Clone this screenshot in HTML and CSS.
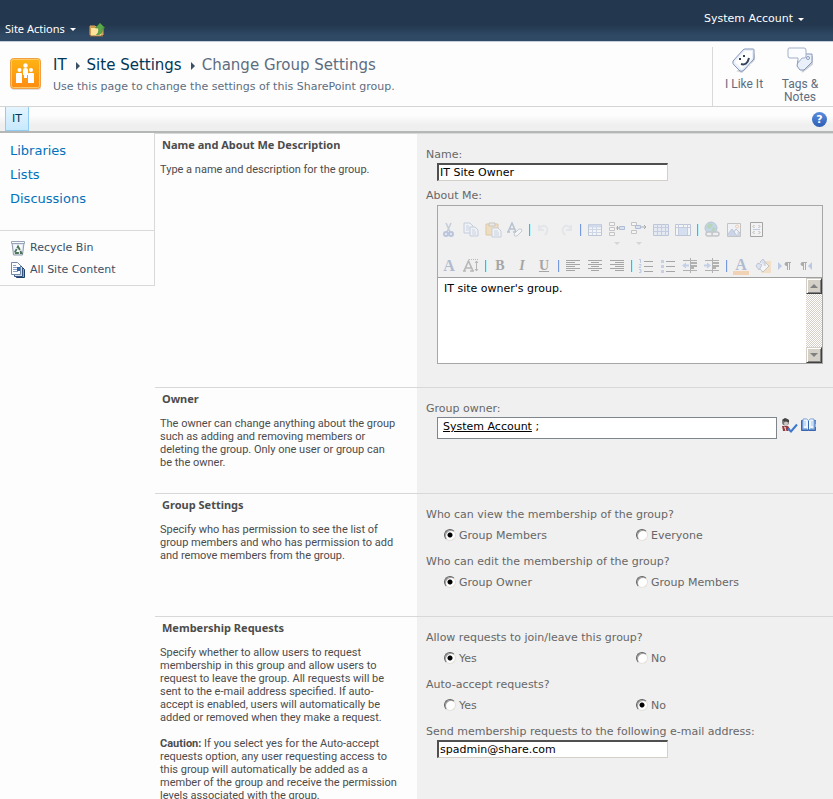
FILE: index.html
```html
<!DOCTYPE html>
<html lang="en">
<head>
<meta charset="utf-8">
<title>Change Group Settings</title>
<link rel="stylesheet" href="styles.css">
</head>
<body>
<header>
  <div class="topbar">
    <button class="menu site-actions" type="button">Site Actions <span class="caret"></span></button>
    <button class="up" type="button" aria-label="Navigate up">
      <svg width="18" height="16" viewBox="0 0 18 16"><path d="M1 4h5l1 1h7v8H1z" fill="#c79b45" stroke="#d8a466"/><path d="M2 6h11l-1 8H2z" fill="#ffe39a"/><path d="M1 14h13" stroke="#9c6b39"/><path d="M11 1l5 5h-2.500c0 5-2 7-6 6.500c2-1 2.500-3 2-6.500H6.500z" fill="#5aa848" stroke="#31833b" stroke-width=".6"/></svg>
    </button>
    <button class="menu account" type="button">System Account <span class="caret"></span></button>
  </div>
  <div class="titlebar">
    <svg class="logo" width="32" height="32" viewBox="0 0 32 32"><defs><linearGradient id="og" x2="0" y2="1"><stop offset="0" stop-color="#ffb414"/><stop offset=".5" stop-color="#fda111"/><stop offset="1" stop-color="#ff8a12"/></linearGradient></defs><rect x="1" y="2" width="30" height="30" rx="3" fill="#ddd"/><rect x=".5" y=".5" width="30" height="30" rx="3" fill="url(#og)" stroke="#f0a040"/><rect x="1.500" y="1.500" width="28" height="28" rx="2" fill="none" stroke="#ffc861"/><g fill="#fff"><circle cx="9.500" cy="12" r="2"/><circle cx="15.500" cy="7.500" r="2.200"/><circle cx="21" cy="12" r="2"/><path d="M6 16q0-1 1-1h4q1 0 1 1v9H6zM18 16q0-1 1-1h4q1 0 1 1v9h-6zM13 12q0-2 2.500-2t2.500 2v5h-1v3h-3v-3h-1z"/></g></svg>
    <div class="heading">
      <h1><a href="#">IT</a><span class="arrow"></span><a href="#">Site Settings</a><span class="arrow"></span><span>Change Group Settings</span></h1>
      <p>Use this page to change the settings of this SharePoint group.</p>
    </div>
    <div class="social">
      <button type="button"><svg width="26" height="28" viewBox="0 0 26 28"><path d="M5 24l6 2 13-13V6l-5 13z" fill="#cfd2d8"/><path d="M2 14L12 3q1-1 2-1h8q1 0 1 1v8q0 1-1 2L13 23q-2 2-4 1l-5-5q-3-2-2-5z" fill="#eaf0fa" stroke="#8395b7"/><path d="M4 15L14 4h7v7L11 22z" fill="#fff"/><path d="M8 11h2v2H8zM12 8h2v2h-2z" fill="#34435b"/><path d="M10 17q6 2 8-6" fill="none" stroke="#34435b" stroke-width="2"/></svg><span>I Like It</span></button>
      <button type="button"><svg width="28" height="28" viewBox="0 0 28 28"><path d="M16 25l10-8V9" fill="none" stroke="#ccd0d6" stroke-width="2"/><path d="M12 13l6-6h8v8l-8 8h-4l-3-4z" fill="#eaf0fa" stroke="#8598b8"/><circle cx="22" cy="11" r="1.500" fill="#fff" stroke="#8598b8"/><path d="M3 1h15q2 0 2 2v6q0 2-2 2h-2l-4 5v-5H4q-2 0-2-2V3q0-2 1-2z" fill="#fbfcff" stroke="#a2aec8"/></svg><span>Tags &amp;<br>Notes</span></button>
    </div>
  </div>
  <nav class="tabs">
    <a href="#">IT</a>
    <button class="help" type="button" aria-label="Help"><span>?</span></button>
  </nav>
</header>
<div class="layout">
  <aside>
    <ul class="lists">
      <li><a href="#">Libraries</a></li>
      <li><a href="#">Lists</a></li>
      <li><a href="#">Discussions</a></li>
    </ul>
    <ul class="tools">
      <li><a href="#"><svg width="16" height="16" viewBox="0 0 16 16"><path d="M2 3l1.500 12h9L14 3z" fill="#e4eaf2" stroke="#8e9cae"/><path d="M1.500 1.500h13v2h-13z" fill="#fafcff" stroke="#98a5b7"/><path d="M4 5h8l-1 9H5z" fill="#f8fbff"/><path d="M8 6.500l3.500 6.500h-7z" fill="none" stroke="#4e7559" stroke-width="1.800" stroke-dasharray="4 1"/></svg>Recycle Bin</a></li>
      <li><a href="#"><svg width="16" height="16" viewBox="0 0 16 16"><path d="M6.500 4.500h5l3 3v8h-8z" fill="#8aa6cb" stroke="#1d3d6a"/><path d="M4.500 2.500h5l3 3v9h-8z" fill="#cfddef" stroke="#34547f"/><path d="M1.500.5h6l3 3v9h-9z" fill="#fff" stroke="#7489a9"/><path d="M3 3.500h3M3 5.500h5M3 7.500h5M3 9.500h5" stroke="#89a2c4"/><path d="M7 5h3v4H7z" fill="#2e68aa"/></svg>All Site Content</a></li>
    </ul>
  </aside>
  <main>
    <section>
      <div class="about"><h2>Name and About Me Description</h2><p>Type a name and description for the group.</p></div>
      <div class="fields">
        <label for="name">Name:</label>
        <input class="text" id="name" type="text" value="IT Site Owner">
        <label class="next" for="aboutme">About Me:</label>
        <div class="editor">
          <div class="toolbar">
            <div class="toolrow">
              <button type="button" aria-label="Cut"><svg viewBox="0 0 16 16"><path d="M5 1l4 9M10 1L6 10" stroke="#7890ad" stroke-width="1.500"/><g fill="none" stroke="#5c78bd" stroke-width="2"><circle cx="5" cy="12" r="2"/><circle cx="10" cy="12" r="2"/></g></svg></button>
              <button type="button" aria-label="Copy"><svg viewBox="0 0 16 16"><g fill="#eef4ff" stroke="#7991bf"><path d="M1 1h6l3 3v7H1z"/><path d="M7 5h5l3 3v6H7z"/></g><path d="M3 4h3M3 6h4M3 8h3M9 8h3M9 10h4M9 12h4" stroke="#8ba3d0"/></svg></button>
              <button type="button" aria-label="Paste"><svg viewBox="0 0 16 16"><path d="M1 2h12v11H1z" fill="#f0be66" stroke="#b4863c"/><path d="M4 1h6v3H4z" fill="#ddd" stroke="#88806f"/><path d="M7 6h6l3 3v6H7z" fill="#f6f9ff" stroke="#7d94bd"/><path d="M9 9h4M9 11h5M9 13h5" stroke="#8ca1c4"/></svg></button>
              <button type="button" aria-label="Clear format"><svg viewBox="0 0 16 16"><path d="M1 10L5 1l4 9M3 7h4M0 10h3M6 10h4" fill="none" stroke="#536f9b" stroke-width="1.500"/><path d="M7 12l5-5q3-1 3 2l-5 5q-3 1-3-2z" fill="#fff" stroke="#7e8fab"/></svg></button>
              <i class="sep"></i>
              <button class="faint" type="button" aria-label="Undo"><svg viewBox="0 0 16 16"><path d="M3 3v5h5M3 8q2-5 6-4 5 3 0 9" fill="none" stroke="#9aafcd" stroke-width="2"/></svg></button>
              <button class="faint" type="button" aria-label="Redo"><svg viewBox="0 0 16 16"><path d="M13 3v5H8M13 8Q11 3 7 4q-5 3 0 9" fill="none" stroke="#9aafcd" stroke-width="2"/></svg></button>
              <i class="sep"></i>
              <button type="button" aria-label="Insert table"><svg viewBox="0 0 16 16"><path d="M1.500 2.500h13v11h-13z" fill="#fff" stroke="#647fae"/><path d="M2 4h12" stroke="#9ab6e5" stroke-width="3"/><path d="M5.500 5v8M9.500 5v8M2 7.500h12M2 10.500h12" stroke="#92a9d1"/></svg></button>
              <button class="drop" type="button" aria-label="Insert cells"><svg viewBox="0 0 16 16"><path d="M.5.5h5v3h-5zM.5 5.500h5v3h-5zM.5 10.500h5v3h-5z" fill="#fff" stroke="#777"/><path d="M7 6h3M8.500 4v4" stroke="#333"/><path d="M10.500 4.500h5v3h-5z" fill="#b3cbf3" stroke="#4464ab"/></svg></button>
              <button class="drop" type="button" aria-label="Delete cells"><svg viewBox="0 0 16 16"><path d="M.5.5h5v3h-5zM.5 8.500h5v3h-5z" fill="#fff" stroke="#777"/><path d="M4.500 3.500h5v3h-5z" fill="#b3cbf3" stroke="#4464ab"/><path d="M10 5h5M13 3l2 2-2 2" stroke="#333" fill="none"/></svg></button>
              <button type="button" aria-label="Split cells"><svg viewBox="0 0 16 16"><path d="M.5 2.500h15v11H.5z" fill="#d1dff7" stroke="#647fae"/><path d="M4.500 2v11M8.500 2v11M12.500 2v11M1 5.500h14M1 9.500h14" stroke="#7891c4"/></svg></button>
              <button type="button" aria-label="Merge cells"><svg viewBox="0 0 16 16"><path d="M.5 2.500h15v11H.5z" fill="#fff" stroke="#647fae"/><path d="M4 6h9v7H4z" fill="#a9c3f2"/><path d="M3.500 2v11M8.500 2v3M12.500 2v11M1 5.500h14" stroke="#7891c4"/></svg></button>
              <i class="sep"></i>
              <button type="button" aria-label="Insert link"><svg viewBox="0 0 16 16"><circle cx="7" cy="6" r="6" fill="#76a7df" stroke="#617ba7"/><path d="M5 1l4 1-1 3-3 2-3-2zM9 5l3 1-2 4-3-1z" fill="#55a764"/><g fill="#eee" stroke="#737b88" stroke-width="1.500"><rect x="2" y="10" width="7" height="4" rx="2"/><rect x="8" y="10" width="7" height="4" rx="2"/></g></svg></button>
              <button type="button" aria-label="Insert picture"><svg viewBox="0 0 16 16"><path d="M1.500 1.500h13v13h-13z" fill="#eef5ff" stroke="#777"/><circle cx="11" cy="4.500" r="1.500" fill="#fff" stroke="#e1893e"/><path d="M2 12l4-5 5 7 1-5 2 2v3H2z" fill="#8ba7d8"/><path d="M2 12l4-5 5 7M8 10l2-3 4 4" fill="none" stroke="#667fae"/></svg></button>
              <button type="button" aria-label="Edit source"><svg viewBox="0 0 16 16"><path d="M2.500.5h12v14h-12z" fill="#f8f8f8" stroke="#222"/><path d="M6.500 3L5 4.500 6.500 6M10.500 3L12 4.500 10.500 6M6.500 9L5 10.500 6.500 12M10.500 9l1.500 1.500-1.500 1.500" fill="none" stroke="#444"/><path d="M5 7.500h7" stroke="#668dd2"/></svg></button>
            </div>
            <div class="toolrow">
              <button class="serif blue" type="button" aria-label="Font">A</button>
              <button class="serif" type="button" aria-label="Font size"><svg viewBox="0 0 16 16"><path d="M1 13L5.500 3 10 13M3 10h5M0 13h3M7 13h4" fill="none" stroke="#555" stroke-width="1.600"/><path d="M6 1.500h9" stroke="#555" stroke-dasharray="1 1"/><path d="M13.500 3v10M12 5l1.500-2L15 5M12 11l1.500 2 1.500-2" fill="none" stroke="#555"/></svg></button>
              <i class="sep"></i>
              <button class="serif" type="button">B</button>
              <button class="serif italic" type="button">I</button>
              <button class="serif underline" type="button">U</button>
              <i class="sep"></i>
              <button type="button" aria-label="Align left"><svg viewBox="0 0 16 16"><path d="M1 2.500h14M1 4.500h9M1 6.500h14M1 8.500h9M1 10.500h14M1 12.500h9" stroke="#222"/></svg></button>
              <button type="button" aria-label="Center"><svg viewBox="0 0 16 16"><path d="M1 2.500h14M4 4.500h8M1 6.500h14M4 8.500h8M1 10.500h14M4 12.500h8" stroke="#222"/></svg></button>
              <button type="button" aria-label="Align right"><svg viewBox="0 0 16 16"><path d="M1 2.500h14M6 4.500h9M1 6.500h14M6 8.500h9M1 10.500h14M6 12.500h9" stroke="#222"/></svg></button>
              <i class="sep"></i>
              <button type="button" aria-label="Numbered list"><svg viewBox="0 0 16 16"><path d="M6 3.500h9M6 8.500h9M6 13.500h9" stroke="#222"/><path d="M1 1.500h1.500V5M1 6.500h2v1L1 9.500h2M1 11.500h2v3H1M2 13h1" fill="none" stroke="#6289d0"/></svg></button>
              <button type="button" aria-label="Bulleted list"><svg viewBox="0 0 16 16"><path d="M6 3.500h9M6 8.500h9M6 13.500h9" stroke="#222"/><path d="M1 2h3v3H1zM1 7h3v3H1zM1 12h3v3H1z" fill="#7c99d2"/></svg></button>
              <button type="button" aria-label="Outdent"><svg viewBox="0 0 16 16"><path d="M1 2.500h14M1 12.500h14M8.500 0v15" stroke="#444"/><path d="M8 5h7M8 8h7M8 10h4" stroke="#444" stroke-width="2"/><path d="M0 7.500l4-3v2h3v2H4v2z" fill="#7398dd"/></svg></button>
              <button type="button" aria-label="Indent"><svg viewBox="0 0 16 16"><path d="M1 2.500h14M1 12.500h14M8.500 0v15" stroke="#444"/><path d="M8 5h7M8 8h7M8 10h4" stroke="#444" stroke-width="2"/><path d="M7 7.500l-4-3v2H0v2h3v2z" fill="#7398dd"/></svg></button>
              <i class="sep"></i>
              <button class="serif blue color" type="button" aria-label="Text color">A</button>
              <button type="button" aria-label="Highlight"><svg viewBox="0 0 16 16"><path d="M6 3h10v12H6z" fill="#f4c681"/><path d="M2 8l6-6 6 6-6 6z" fill="#fff" stroke="#777"/><path d="M1 8l2-3 4 2-3 5zM5 4l3-3 2 3v4" fill="#bdcceb" stroke="#6681ac"/></svg></button>
              <button type="button" aria-label="Left to right"><svg viewBox="0 0 16 16"><path d="M1 4l4 4-4 4z" fill="#5f88d1"/><path d="M14 4.500H9M10.500 4v8M12.500 4v8" fill="none" stroke="#333"/><path d="M11 4H9q-3 2 0 4h2z" fill="#333"/></svg></button>
              <button type="button" aria-label="Right to left"><svg viewBox="0 0 16 16"><path d="M13 4L9 8l4 4z" fill="#5f88d1"/><path d="M8 4.500H3M4.500 4v8M6.500 4v8" fill="none" stroke="#333"/><path d="M5 4H3Q0 6 3 8h2z" fill="#333"/></svg></button>
            </div>
          </div>
          <div class="editbox">
            <textarea id="aboutme">IT site owner's group.</textarea>
            <div class="scroll"><button type="button" aria-label="Scroll up"><i class="tri-up"></i></button><button type="button" aria-label="Scroll down"><i class="tri-down"></i></button></div>
          </div>
        </div>
      </div>
    </section>
    <section>
      <div class="about"><h2>Owner</h2><p>The owner can change anything about the group<br>such as adding and removing members or<br>deleting the group. Only one user or group can<br>be the owner.</p></div>
      <div class="fields">
        <label id="ownerlabel">Group owner:</label>
        <div class="picker">
          <div class="people" role="textbox" aria-labelledby="ownerlabel" contenteditable="true"><u>System Account</u> ;</div>
          <button type="button" aria-label="Check names"><svg width="18" height="16" viewBox="0 0 18 16"><path d="M1 8h6l2 3-2 2H2z" fill="#963c41"/><circle cx="4.500" cy="4" r="3.500" fill="#777"/><path d="M1 2l3-2 4 2v2H4z" fill="#444"/><circle cx="5" cy="5.500" r="2" fill="#cdc6c4"/><path d="M3 9l2 1M4 10l1 3" stroke="#e7e0e0"/><path d="M7 10.500l3 3 6-7" fill="none" stroke="#3e78cc" stroke-width="2"/></svg></button>
          <button type="button" aria-label="Browse"><svg width="17" height="16" viewBox="0 0 17 16"><path d="M.5 2.500h14v10H.5z" fill="#5e8bcc" stroke="#3865ab"/><path d="M2 1q4-1 5.500 1.500Q9 0 13 1v10q-4-1-5.500 1Q6 10 2 11z" fill="#edf6ff" stroke="#7aa3d8"/><path d="M7.500 3v9" stroke="#3568b3"/><path d="M4 3v5M11 3v5" stroke="#a3c4ec"/><path d="M14 3h1v3h-1z" fill="#63a94a"/><path d="M14 6h1v3h-1z" fill="#eaae32"/><path d="M14 9h1v2h-1z" fill="#c94235"/></svg></button>
        </div>
      </div>
    </section>
    <section>
      <div class="about"><h2>Group Settings</h2><p>Specify who has permission to see the list of<br>group members and who has permission to add<br>and remove members from the group.</p></div>
      <div class="fields">
        <fieldset><legend>Who can view the membership of the group?</legend>
          <div class="radios"><label><input type="radio" name="view" checked>Group Members</label><label><input type="radio" name="view">Everyone</label></div></fieldset>
        <fieldset><legend>Who can edit the membership of the group?</legend>
          <div class="radios"><label><input type="radio" name="edit" checked>Group Owner</label><label><input type="radio" name="edit">Group Members</label></div></fieldset>
      </div>
    </section>
    <section>
      <div class="about"><h2>Membership Requests</h2><p>Specify whether to allow users to request<br>membership in this group and allow users to<br>request to leave the group. All requests will be<br>sent to the e-mail address specified. If auto-<br>accept is enabled, users will automatically be<br>added or removed when they make a request.</p><p><b>Caution:</b> If you select yes for the Auto-accept<br>requests option, any user requesting access to<br>this group will automatically be added as a<br>member of the group and receive the permission<br>levels associated with the group.</p></div>
      <div class="fields">
        <fieldset><legend>Allow requests to join/leave this group?</legend>
          <div class="radios"><label><input type="radio" name="allow" checked>Yes</label><label><input type="radio" name="allow">No</label></div></fieldset>
        <fieldset><legend>Auto-accept requests?</legend>
          <div class="radios"><label><input type="radio" name="auto">Yes</label><label><input type="radio" name="auto" checked>No</label></div></fieldset>
        <label for="email">Send membership requests to the following e-mail address:</label>
        <input class="text" id="email" type="text" value="spadmin@share.com">
      </div>
    </section>
  </main>
</div>
</body>
</html>
```
FILE: styles.css
```css
* { box-sizing: border-box; }
html { scrollbar-width: none; }
body { margin: 0; background: #fdfdfd; color: #676767; font: 11px/18px Verdana, "DejaVu Sans", sans-serif; }
h1, h2, p, ul, fieldset, legend { margin: 0; padding: 0; border: 0; }
ul { list-style: none; }
a { color: inherit; text-decoration: none; }
button { padding: 0; border: 0; background: none; color: inherit; font: inherit; }
svg { display: block; flex: none; }

.topbar { display: flex; height: 42px; padding-left: 5px; color: #fff; background: linear-gradient(#23384e 0 60%, #2f4965 88%); border-bottom: 1px solid #c3cddb; }
.menu { display: flex; align-items: center; gap: 5px; height: 18px; }
.caret { border: 3px solid transparent; border-top-color: #fff; border-bottom: 0; }
.site-actions { margin-top: 20px; font-family: "Noto Sans", sans-serif; }
.up { height: 16px; margin: 22px 0 0 13px; }
.account { margin: 10px 29px 0 auto; }

.titlebar { display: flex; height: 65px; border-bottom: 1px solid #d4d4d4; background: #fdfdfd; }
.logo { margin: 16px 0 0 10px; }
.heading { margin: 12px 0 0 11px; flex: 1; color: #5d6d80; }
h1 { display: flex; align-items: center; height: 22px; font-size: 15px; font-weight: normal; white-space: nowrap; }
h1 a { color: #003759; }
.arrow { margin: 2px 7px 0 9px; border: 4px solid transparent; border-left-color: #3b4f65; border-right: 0; }
.heading p { margin-top: 2px; }
.social { display: flex; margin: 5px 8px 0 0; border-left: 1px solid #d9d9d9; color: #5d6d80; font-family: Roboto, sans-serif; font-size: 12px; line-height: 13px; }
.social button { display: flex; flex-direction: column; align-items: center; gap: 3px; width: 50px; }
.social button:first-child { width: 62px; }

.tabs { display: flex; justify-content: space-between; height: 26px; padding: 0 6px 0 5px; border-bottom: 2px solid #b5b7b7; background: linear-gradient(#fdfdfd 35%, #efefef 75%); }
.tabs a { width: 24px; border: 1px solid #91cdf2; border-top: 0; background: linear-gradient(#e3f4ff, #c8e9fd); color: #003759; line-height: 24px; text-align: center; }
.help { width: 15px; height: 15px; margin-top: 5px; border-radius: 50%; background: linear-gradient(#5b8ddd, #2c5eb6); color: #fff; font-weight: bold; line-height: 15px; }

.layout { display: flex; align-items: flex-start; }
aside { width: 155px; flex: none; border: 1px solid #d9d9d9; border-width: 0 1px 1px 0; }
.lists { height: 97px; padding: 6px 10px 0; color: #0072bc; font-size: 13px; line-height: 24px; }
.tools { padding: 6px 10px 4px; border-top: 1px solid #d9d9d9; color: #3b4f65; line-height: 22px; }
.tools a { display: flex; align-items: center; gap: 4px; }

main { flex: 1; min-width: 0; }
section { display: grid; grid-template-columns: 262px minmax(0, 1fr); border-top: 1px solid #d8d8d8; }
.about { padding: 4px 0 24px 5px; color: #4c4c4c; font: 11px/13px Roboto, sans-serif; white-space: nowrap; }
h2 { padding-left: 2px; font: bold 11px/14px "Noto Sans", sans-serif; }
.about p { margin-top: 11px; }
.about p + p { margin-top: 13px; }
section:last-child .about { padding-bottom: 0; }
.fields { padding: 11px 10px 17px 9px; background: #f0f0f0; }
.fields > label, legend { display: block; height: 18px; line-height: 20px; }
.fields > .next { margin-top: 5px; }
.text { display: block; width: 231px; height: 18px; margin-left: 11px; padding: 1px 1px 0; border: 2px solid #404040; border-color: #505050 #d4d0c8 #d4d0c8 #505050; border-width: 2px 1px 1px 2px; background: #fff; color: #000; font: inherit; }

.editor { margin: 1px 0 6px 11px; border: 1px solid #a7a7a7; }
.toolbar { height: 72px; padding-top: 13px; border-bottom: 1px solid #a0a0a0; }
.toolrow { display: flex; height: 22px; margin-bottom: 14px; }
.toolrow button { position: relative; display: flex; align-items: center; justify-content: center; width: 22px; opacity: .36; }
.toolrow svg { width: 16px; height: 16px; overflow: visible; }
.toolrow .faint { opacity: .15; }
.drop::after { content: ""; position: absolute; top: 23px; left: 8px; border: 3px solid transparent; border-top-color: #aaa; border-bottom: 0; }
.sep { width: 2px; height: 12px; margin: 5px 2px 0 3px; border-left: 1px solid #7799de; background: #b8f2fc; }
.toolrow .serif { color: #222; font: bold 14px/16px "Liberation Serif", serif; }
.toolrow .blue { color: #40609a; font-size: 16px; }
.toolrow .italic { font-style: italic; }
.underline { text-decoration: underline; }
.toolrow .color { padding-bottom: 2px; }
.color::after { content: ""; position: absolute; top: 16px; left: 3px; width: 16px; height: 4px; background: #f4a04b; }
.editbox { display: flex; height: 85px; background: #fff; }
textarea { flex: 1; min-width: 0; padding: 2px 6px; border: 0; background: #fff; color: #000; font: inherit; resize: none; outline: 0; overflow: hidden; }
.scroll { display: flex; flex-direction: column; justify-content: space-between; width: 16px; background: repeating-conic-gradient(#d4d0c8 0 25%, #fff 0 50%) 0 0 / 2px 2px; }
.scroll button { display: grid; place-items: center; width: 16px; height: 16px; border: 1px solid; border-color: #d4d0c8 #404040 #404040 #d4d0c8; background: #d4d0c8; box-shadow: inset 1px 1px #fff, inset -1px -1px #808080; }
.tri-up, .tri-down { border: 4px solid transparent; }
.tri-up { border-top: 0; border-bottom-color: #808080; }
.tri-down { border-bottom: 0; border-top-color: #808080; }

.picker { display: flex; align-items: flex-start; margin-left: 11px; }
.people { flex: 1; height: 22px; padding: 0 5px; border: 1px solid #7f858c; background: #fff; color: #000; }
.picker button { margin: 1px 0 0 4px; }
.picker button + button { margin: 1px 5px 0 2px; }

.radios { display: grid; grid-template-columns: 192px 1fr; margin: 0 0 3px 18px; }
.radios label { display: flex; align-items: center; gap: 3px; height: 26px; }
.radios input { appearance: none; width: 12px; height: 12px; margin: 0 0 2px; border: 1px solid; border-color: #606060 #e4e1db #e4e1db #606060; border-radius: 50%; background: #fff; box-shadow: inset 1px 1px #a0a0a0; }
.radios input:checked { background: radial-gradient(circle, #000 0 2px, #fff 3px); }
```
